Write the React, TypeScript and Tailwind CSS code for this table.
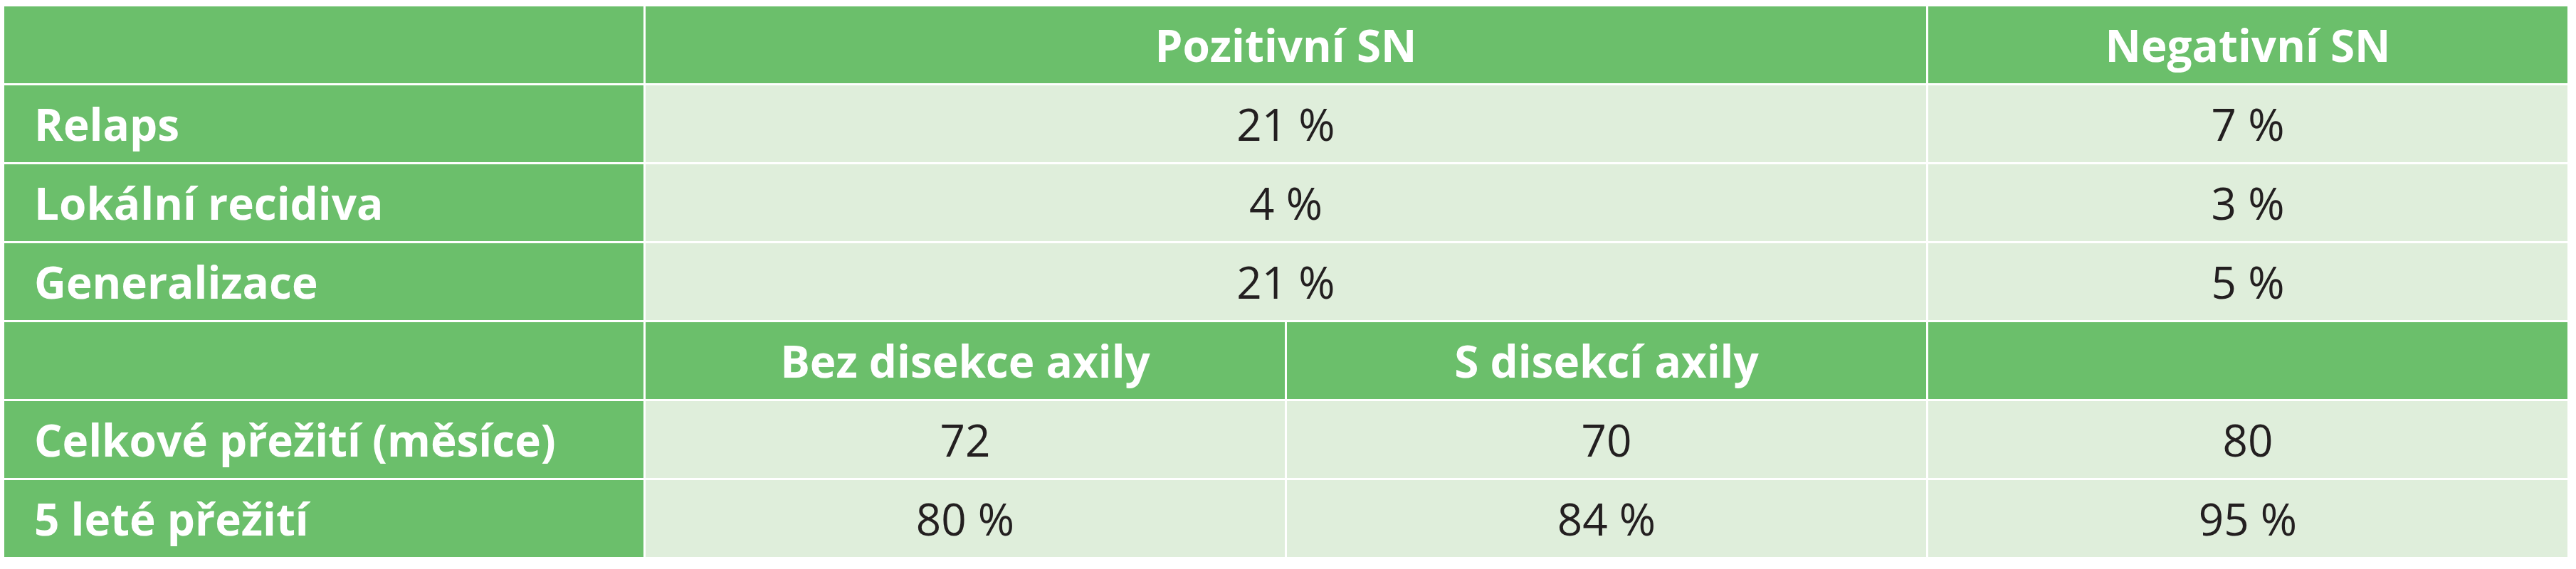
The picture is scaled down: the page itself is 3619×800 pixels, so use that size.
const head = "flex items-center justify-center bg-[#6bbf6b] text-white font-bold";
const label = "flex items-center bg-[#6bbf6b] pl-[42px] text-white font-bold";
const cell = "flex items-center justify-center bg-[#dfeedb] text-[#231f20]";

const topRows = [
  { label: "Relaps", pos: "21 %", neg: "7 %" },
  { label: "Lokální recidiva", pos: "4 %", neg: "3 %" },
  { label: "Generalizace", pos: "21 %", neg: "5 %" },
];

const bottomRows = [
  { label: "Celkové přežití (měsíce)", bez: "72", s: "70", neg: "80" },
  { label: "5 leté přežití", bez: "80 %", s: "84 %", neg: "95 %" },
];

export default function App() {
  return (
    <div className="min-h-[800px] w-[3619px] bg-white pl-[6px] pt-[9px]">
      <div className="grid w-[3601px] grid-cols-4 auto-rows-[108px] gap-[3px] font-['Open_Sans',sans-serif] text-[62px] leading-none">
        <div className={head} />
        <div className={`${head} col-span-2`}>Pozitivní SN</div>
        <div className={head}>Negativní SN</div>

        {topRows.map((row) => (
          <div key={row.label} className="contents">
            <div className={label}>{row.label}</div>
            <div className={`${cell} col-span-2`}>{row.pos}</div>
            <div className={cell}>{row.neg}</div>
          </div>
        ))}

        <div className={head} />
        <div className={head}>Bez disekce axily</div>
        <div className={head}>S disekcí axily</div>
        <div className={head} />

        {bottomRows.map((row) => (
          <div key={row.label} className="contents">
            <div className={label}>{row.label}</div>
            <div className={cell}>{row.bez}</div>
            <div className={cell}>{row.s}</div>
            <div className={cell}>{row.neg}</div>
          </div>
        ))}
      </div>
    </div>
  );
}
